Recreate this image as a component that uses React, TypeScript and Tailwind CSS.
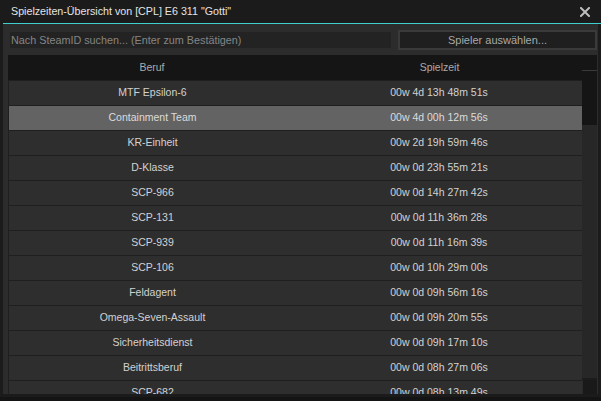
import React from "react";

interface PlaytimeRow {
  job: string;
  time: string;
}

const rows: PlaytimeRow[] = [
  { job: "MTF Epsilon-6", time: "00w 4d 13h 48m 51s" },
  { job: "Containment Team", time: "00w 4d 00h 12m 56s" },
  { job: "KR-Einheit", time: "00w 2d 19h 59m 46s" },
  { job: "D-Klasse", time: "00w 0d 23h 55m 21s" },
  { job: "SCP-966", time: "00w 0d 14h 27m 42s" },
  { job: "SCP-131", time: "00w 0d 11h 36m 28s" },
  { job: "SCP-939", time: "00w 0d 11h 16m 39s" },
  { job: "SCP-106", time: "00w 0d 10h 29m 00s" },
  { job: "Feldagent", time: "00w 0d 09h 56m 16s" },
  { job: "Omega-Seven-Assault", time: "00w 0d 09h 20m 55s" },
  { job: "Sicherheitsdienst", time: "00w 0d 09h 17m 10s" },
  { job: "Beitrittsberuf", time: "00w 0d 08h 27m 06s" },
  { job: "SCP-682", time: "00w 0d 08h 13m 49s" },
];

const font = "font-['Liberation_Sans',Arial,sans-serif]";

const CloseIcon = () => (
  <svg width="10" height="10" viewBox="0 0 10 10" className="block">
    <path
      d="M1 1 L9 9 M9 1 L1 9"
      stroke="#bdbdbd"
      strokeWidth="2"
      strokeLinecap="square"
    />
  </svg>
);

const Scrollbar = () => (
  <div className="absolute right-0 top-[15px] bottom-0 w-[15px] flex flex-col">
    <div className="h-px shrink-0 bg-[#3a3a3a]" />
    <div className="h-[54px] shrink-0 bg-[#151515]" />
    <div className="flex-1 bg-[#272727]" />
    <div className="h-[2px] shrink-0 bg-[#1c1c1c]" />
    <div className="h-[14px] shrink-0 bg-[#191919] border-l border-[#2a2a2a]" />
  </div>
);

const PlaytimeTable = () => {
  return (
    <div className="relative mt-[5px] ml-[5px] mr-px flex-1 min-h-0 overflow-hidden bg-[#1f1f1f]">
      <div className="flex h-[25px] bg-[#151515] text-[10.5px] text-[#ababab]">
        <div className="w-[288px] flex items-center justify-center">Beruf</div>
        <div className="w-[287px] flex items-center justify-center">
          Spielzeit
        </div>
      </div>
      <div className="ml-px w-[573px]">
        {rows.map((row, i) => (
          <div
            key={row.job}
            className={
              i === 1
                ? "flex h-[25px] border-t border-[#1f1f1f] bg-[#636363] text-[#dcdcdc] text-[10.5px]"
                : "flex h-[25px] border-t border-[#1f1f1f] bg-[#2e2e2e] text-[#d2d2d2] text-[10.5px]"
            }
          >
            <div className="w-[287px] flex items-center justify-center">
              {row.job}
            </div>
            <div className="w-[286px] flex items-center justify-center">
              {row.time}
            </div>
          </div>
        ))}
      </div>
      <Scrollbar />
    </div>
  );
};

const App = () => {
  return (
    <div className={`w-[601px] h-[401px] bg-[#141414] ${font}`}>
      <div className="h-[397px] bg-[#1b1b1b] flex flex-col pb-[3px]">
        <div className="h-[23px] shrink-0 flex items-center justify-between pl-[11px] pr-[11px]">
          <span className="text-[10.7px] text-[#e4e4e4]">
            Spielzeiten-Übersicht von [CPL] E6 311 "Gotti"
          </span>
          <CloseIcon />
        </div>
        <div className="h-px shrink-0 ml-[3px] bg-[#3fcfcf]" />
        <div className="mx-[3px] flex-1 min-h-0 bg-[#2c2c2c] flex flex-col pt-[6px]">
          <div className="flex shrink-0 items-center h-[20px]">
            <div className="ml-[7px] w-[381px] h-[16px] bg-[#232323] flex items-center pl-px text-[10.8px] text-[#858585]">
              Nach SteamID suchen... (Enter zum Bestätigen)
            </div>
            <button className="ml-[7px] w-[199px] h-[20px] border-2 border-[#3a3a3a] bg-[#1f1f1f] text-[11px] text-[#a8a8a8] flex items-center justify-center">
              Spieler auswählen...
            </button>
          </div>
          <PlaytimeTable />
        </div>
      </div>
    </div>
  );
};

export default App;
